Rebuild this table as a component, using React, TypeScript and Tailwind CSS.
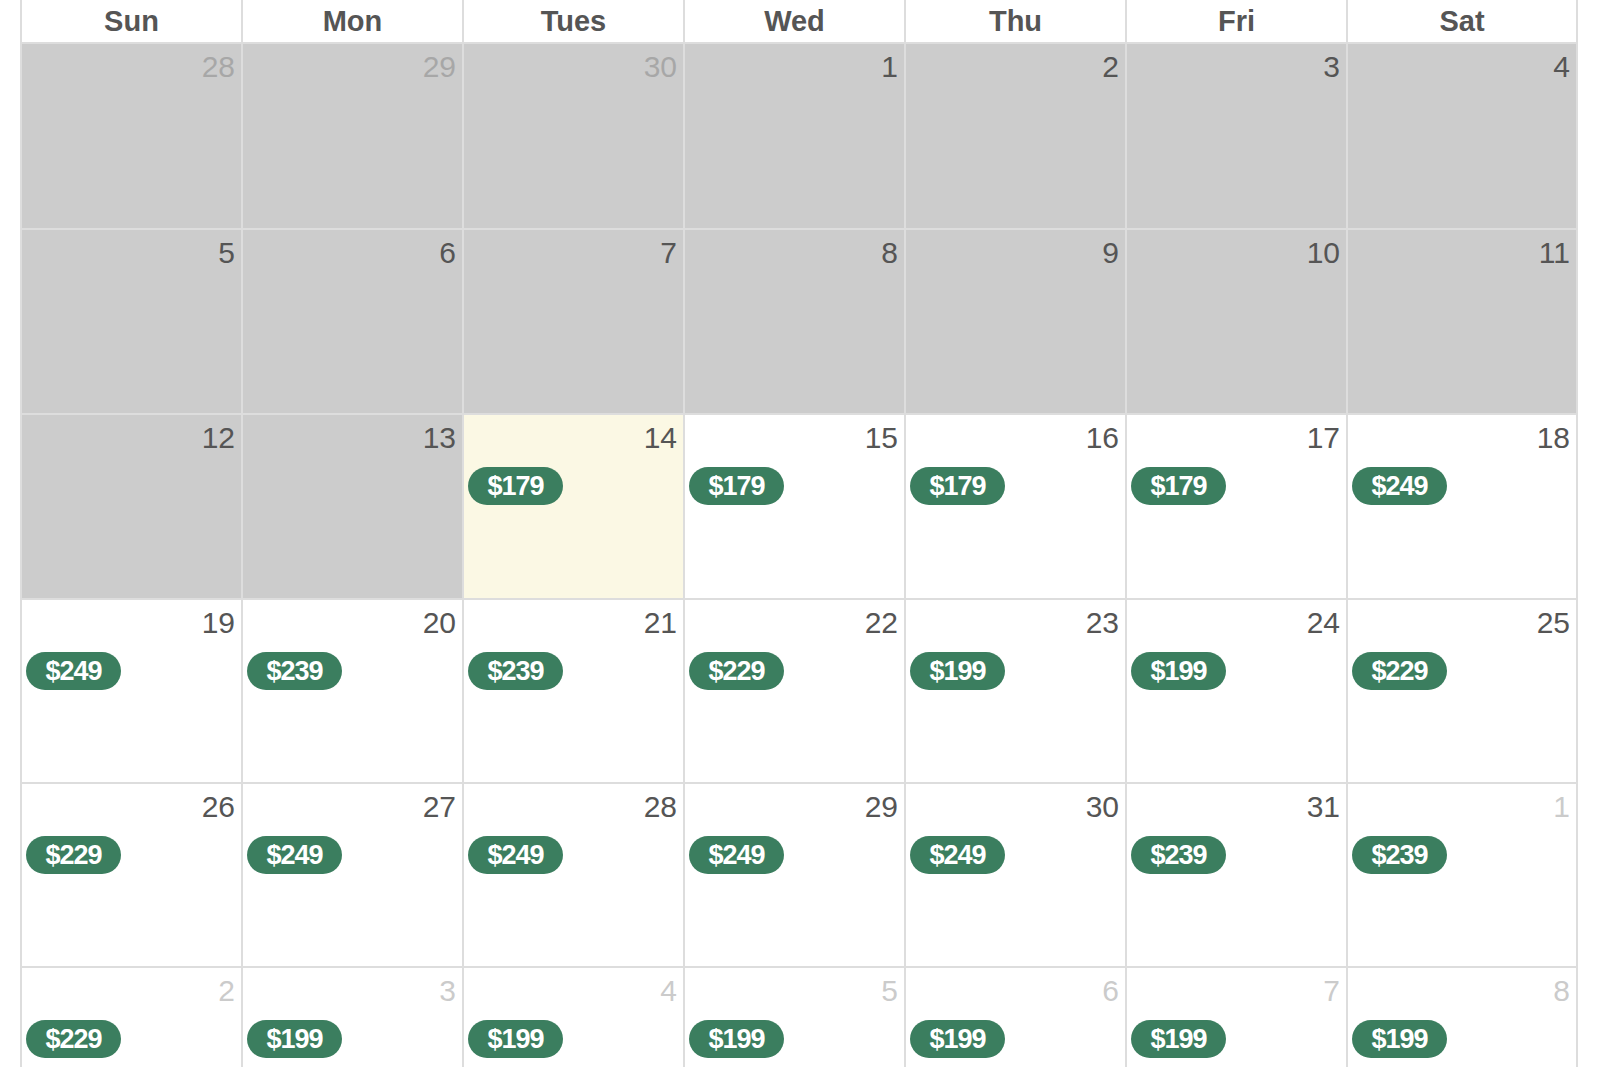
const DAYS = ["Sun", "Mon", "Tues", "Wed", "Thu", "Fri", "Sat"];

type Day = {
  n: number;
  muted?: boolean; // outside the current month
  past?: boolean; // gray, not bookable
  today?: boolean;
  price?: number;
};

const past = (n: number, muted = false): Day => ({ n, past: true, muted });
const open = (n: number, price: number, muted = false): Day => ({ n, price, muted });

const WEEKS: Day[][] = [
  [past(28, true), past(29, true), past(30, true), past(1), past(2), past(3), past(4)],
  [past(5), past(6), past(7), past(8), past(9), past(10), past(11)],
  [past(12), past(13), { n: 14, today: true, price: 179 }, open(15, 179), open(16, 179), open(17, 179), open(18, 249)],
  [open(19, 249), open(20, 239), open(21, 239), open(22, 229), open(23, 199), open(24, 199), open(25, 229)],
  [open(26, 229), open(27, 249), open(28, 249), open(29, 249), open(30, 249), open(31, 239), open(1, 239, true)],
  [open(2, 229, true), open(3, 199, true), open(4, 199, true), open(5, 199, true), open(6, 199, true), open(7, 199, true), open(8, 199, true)],
];

const ROW_HEIGHTS = ["h-[184px]", "h-[183px]", "h-[183px]", "h-[182px]", "h-[182px]", "h-[182px]"];

function PriceBadge({ price }: { price: number }) {
  return (
    <div className="ml-[4px] mt-[14px] flex h-[38px] w-[95px] items-center justify-center rounded-full bg-[#3b7e5f] text-[27px] font-bold leading-none tracking-[-1px] text-white">
      ${price}
    </div>
  );
}

function DayCell({ day, height }: { day: Day; height: string }) {
  const bg = day.today ? "bg-[#fbf8e4]" : day.past ? "bg-[#cccccc]" : "bg-white";
  return (
    <div className={`${bg} ${height} pt-[8px]`}>
      <div
        className={`h-[30px] pr-[6px] text-right text-[30px] leading-[30px] text-[#555] ${
          day.muted ? "opacity-30" : ""
        }`}
      >
        {day.n}
      </div>
      {day.price !== undefined && <PriceBadge price={day.price} />}
    </div>
  );
}

export default function App() {
  return (
    <div
      className="h-[1067px] w-[1600px] overflow-hidden bg-white pl-[20px]"
      style={{ fontFamily: '"Liberation Sans", Arial, Helvetica, sans-serif' }}
    >
      <div className="grid w-[1558px] grid-cols-[219px_219px_219px_219px_219px_219px_228px] gap-[2px] border-x-2 border-[#dddddd] bg-[#dddddd]">
        {DAYS.map((d) => (
          <div
            key={d}
            className="flex h-[42px] items-center justify-center bg-white text-[29px] font-bold leading-none text-[#555]"
          >
            {d}
          </div>
        ))}
        {WEEKS.map((week, wi) =>
          week.map((day, di) => (
            <DayCell key={`${wi}-${di}`} day={day} height={ROW_HEIGHTS[wi]} />
          ))
        )}
      </div>
    </div>
  );
}
